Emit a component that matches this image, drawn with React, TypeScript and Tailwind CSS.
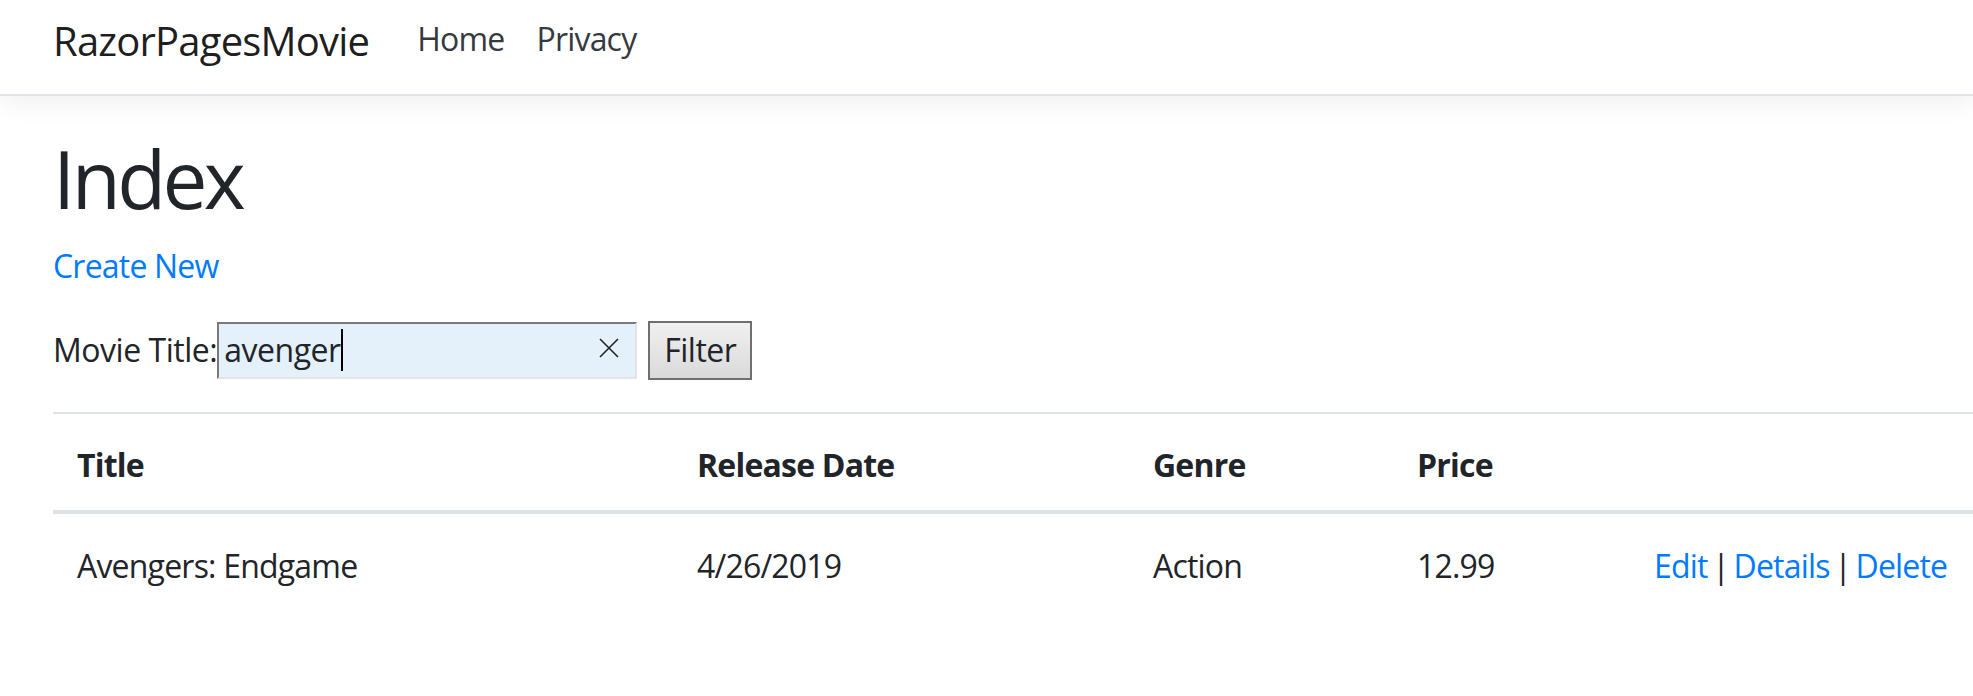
export default function App() {
  const font = { fontFamily: '"Open Sans", "Liberation Sans", sans-serif' };
  return (
    <div className="min-h-[696px] bg-white text-[#212529] tracking-[-0.05em]" style={font}>
      <nav className="h-[96px] bg-white border-b-2 border-[#e2e3e7] shadow-[0_8px_24px_rgba(0,0,0,0.06)] flex items-center pl-[53px] pb-[12px]">
        <a href="#" className="text-[40px] text-black/90 mr-[32px] leading-none">
          RazorPagesMovie
        </a>
        <ul className="flex mb-[4px]">
          <li>
            <a href="#" className="block px-[16px] text-[32px] text-[#343a40] leading-none">
              Home
            </a>
          </li>
          <li>
            <a href="#" className="block px-[16px] text-[32px] text-[#343a40] leading-none">
              Privacy
            </a>
          </li>
        </ul>
      </nav>

      <main className="pl-[53px] pt-[34px]">
        <h1 className="text-[80px] leading-[1.2] font-normal mb-[16px] tracking-[-0.045em]">Index</h1>
        <p className="text-[32px] leading-[1.5] mb-[30px]">
          <a href="#" className="text-[#007bff]">
            Create New
          </a>
        </p>

        <form className="mb-[32px]">
          <div className="flex items-center text-[32px] h-[60px] tracking-[-0.015em]">
            <label>Movie Title:</label>
            <div className="relative flex items-center w-[420px] h-[57px] bg-[#e4f0fa] border-2 border-t-[#7a7a7a] border-l-[#7a7a7a] border-b-[#e3e3e3] border-r-[#e3e3e3] pl-[5px]">
              <span className="leading-none">avenger</span>
              <span className="w-[2px] h-[42px] bg-black" />
              <span className="absolute right-[16px] top-[14px] text-[#222]">
                <svg width="20" height="20" viewBox="0 0 20 20" fill="none" stroke="currentColor" strokeWidth="1.6">
                  <path d="M1 1 L19 19 M19 1 L1 19" />
                </svg>
              </span>
            </div>
            <button
              type="button"
              className="ml-[11px] h-[59px] px-[14px] border-2 border-[#707070] bg-linear-to-b from-[#f0f0f0] to-[#dadada] text-[32px] leading-none text-[#212529]"
            >
              Filter
            </button>
          </div>
        </form>

        <table className="w-full table-fixed border-collapse text-[32px] leading-[1.5]">
          <thead>
            <tr>
              <th className="w-[620px] text-left font-bold pt-[27px] pb-[21px] px-[24px] border-t-2 border-b-4 border-[#dee2e6]">Title</th>
              <th className="w-[456px] text-left font-bold pt-[27px] pb-[21px] px-[24px] border-t-2 border-b-4 border-[#dee2e6]">Release Date</th>
              <th className="w-[264px] text-left font-bold pt-[27px] pb-[21px] px-[24px] border-t-2 border-b-4 border-[#dee2e6]">Genre</th>
              <th className="w-[237px] text-left font-bold pt-[27px] pb-[21px] px-[24px] border-t-2 border-b-4 border-[#dee2e6]">Price</th>
              <th className="text-left pt-[27px] pb-[21px] px-[24px] border-t-2 border-b-4 border-[#dee2e6]"></th>
            </tr>
          </thead>
          <tbody>
            <tr>
              <td className="pt-[28px] pb-[20px] px-[24px] whitespace-nowrap">Avengers: Endgame</td>
              <td className="pt-[28px] pb-[20px] px-[24px]">4/26/2019</td>
              <td className="pt-[28px] pb-[20px] px-[24px]">Action</td>
              <td className="pt-[28px] pb-[20px] px-[24px]">12.99</td>
              <td className="pt-[28px] pb-[20px] px-[24px] whitespace-nowrap [word-spacing:-3px]">
                <a href="#" className="text-[#007bff]">Edit</a> |{" "}
                <a href="#" className="text-[#007bff]">Details</a> |{" "}
                <a href="#" className="text-[#007bff]">Delete</a>
              </td>
            </tr>
          </tbody>
        </table>
      </main>
    </div>
  );
}
